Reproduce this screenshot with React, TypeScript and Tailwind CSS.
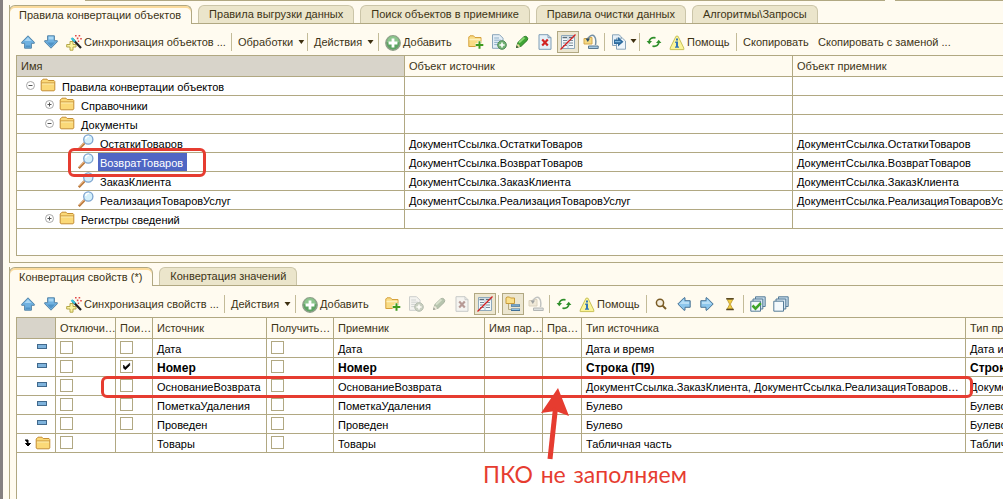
import type { ReactNode } from 'react'

type IconProps = { muted?: boolean }

function Svg({ children, muted }: { children: ReactNode; muted?: boolean }) {
  return (
    <svg
      className={`w-4 h-4 shrink-0 ${muted ? 'grayscale-[70%] opacity-50' : ''}`}
      viewBox="0 0 16 16"
      fill="none"
      aria-hidden="true"
    >
      {children}
    </svg>
  )
}

/* ---------- Icons ---------- */

const ArrowUp = () => (
  <Svg>
    <path d="M8 1.8L14.3 8.2V9.3H11.4V14.2H4.6V9.3H1.7V8.2Z" fill="#6fb1e0" stroke="#5585a8" />
    <path d="M8 3.2L11.5 7H4.5Z" fill="#a9d6f3" />
    <path d="M5.6 11.5H10.4V13.4H5.6Z" fill="#4f93c6" />
  </Svg>
)

const ArrowDown = () => (
  <Svg>
    <path d="M8 14.2L14.3 7.8V6.7H11.4V1.8H4.6V6.7H1.7V7.8Z" fill="#6fb1e0" stroke="#5585a8" />
    <path d="M5.6 2.6H10.4V5.5H5.6Z" fill="#a9d6f3" />
    <path d="M4 8.5H12L8 12.6Z" fill="#4f93c6" />
  </Svg>
)

const ArrowLeft = () => (
  <Svg>
    <path d="M1.8 8L8 1.8H9V4.7H14.2V11.3H9V14.2H8Z" fill="#8cc6ec" stroke="#4a7394" />
    <path d="M3.5 8L7.8 3.8V5.8H13V8Z" fill="#b9dff6" />
  </Svg>
)

const ArrowRight = () => (
  <Svg>
    <path d="M14.2 8L8 1.8H7V4.7H1.8V11.3H7V14.2H8Z" fill="#8cc6ec" stroke="#4a7394" />
    <path d="M12.5 8L8.2 3.8V5.8H3V8Z" fill="#b9dff6" />
  </Svg>
)

const Wand = () => (
  <Svg>
    <path d="M4 6.5H7V9.5H10V12H7V15.2H4V12H0.7V9.5H4Z" fill="#fbf3a0" stroke="#b5a84a" />
    <path d="M6.5 4L15 13" stroke="#222" strokeWidth="2.2" />
    <path d="M5.5 3L9 6.6" stroke="#35c3dc" strokeWidth="2.2" />
    <path d="M9 0h1.6v1.6H9zM12.6 0h1.6v1.6h-1.6zM10.8 2.6h1.6v1.6h-1.6zM14.2 3h1.6v1.6h-1.6zM11.8 5.6h1.4V7h-1.4z" fill="#e04848" />
  </Svg>
)

const AddCircle = () => (
  <Svg>
    <circle cx="8" cy="8" r="7.2" fill="#5da463" stroke="#8f9f8a" strokeWidth="1.4" />
    <path d="M2 7a6 6 0 0 1 12 0C10 9 6 9 2 7Z" fill="#8cc58d" />
    <path d="M6.6 3.6H9.4V6.6H12.4V9.4H9.4V12.4H6.6V9.4H3.6V6.6H6.6Z" fill="#fff" />
  </Svg>
)

const FolderAdd = () => (
  <Svg>
    <path d="M0.8 12.5V3L2 1.8H5.5L7 3.5H13V12.5Z" fill="#f9dc85" stroke="#d5a13c" />
    <path d="M1.5 5.5H12.5" stroke="#fdf0bd" strokeWidth="1.5" />
    <path d="M11.5 7V15M7.5 11H15.5" stroke="#fffbf0" strokeWidth="3.6" />
    <path d="M11.5 7.2V14.8M7.7 11H15.3" stroke="#3f9b1e" strokeWidth="2" />
  </Svg>
)

const DocAdd = ({ muted }: IconProps) => (
  <Svg muted={muted}>
    <path d="M1.5 0.7H8.5L12 4.2V14.3H1.5Z" fill="#e4eef6" stroke="#8aa5ba" />
    <path d="M3.2 4H8M3.2 6.2H10M3.2 8.4H8M3.2 10.6H7" stroke="#8fb0c8" />
    <circle cx="11" cy="11" r="4.3" fill="#74b374" stroke="#4f8a56" />
    <path d="M11 8.4V13.6M8.4 11H13.6" stroke="#fff" strokeWidth="1.6" />
  </Svg>
)

const Pencil = ({ muted }: IconProps) => (
  <Svg muted={muted}>
    <path d="M2.5 13.5L3.8 8.6L9.6 3Q11.5 1.6 13 3.1T13.2 6.4L7.2 12.2Z" fill="#3fa535" stroke="#2e7a2a" />
    <path d="M5 8.6L10.5 3.6" stroke="#8fdc78" strokeWidth="1.8" />
    <path d="M2.5 13.5L3.6 9.6L6.4 12.4Z" fill="#e9d8a0" />
    <path d="M2 14L2.8 11.6L4.4 13.2Z" fill="#2c4a24" />
  </Svg>
)

const DocDelete = ({ muted }: IconProps) => (
  <Svg muted={muted}>
    <path d="M2 0.7H11L14 3.7V15.3H2Z" fill="#e6f0f8" stroke="#7f9db6" />
    <path d="M11 0.7V3.7H14" stroke="#7f9db6" />
    <path d="M5.2 5.6L10.8 11.4M10.8 5.6L5.2 11.4" stroke="#d22222" strokeWidth="2.2" />
  </Svg>
)

const ListOff = () => (
  <Svg>
    <path d="M1.5 1.5H14.5V14.5H1.5Z" fill="#f3f8fb" stroke="#8fa9bb" />
    <path d="M2.5 3.5H7M9 3.5H13.5" stroke="#5d6f7c" strokeWidth="1.4" />
    <path d="M3 6.5H7M3 9H7M3 11.5H7M9 6.5H13M9 9H13M9 11.5H13" stroke="#7b8d99" />
    <path d="M8 2V14" stroke="#a9c0d0" />
    <path d="M0.5 15.5L15.5 0.5" stroke="#d81e1e" strokeWidth="1.3" />
  </Svg>
)

const MoveToFolder = ({ muted }: IconProps) => (
  <Svg muted={muted}>
    <path d="M1 10V4.5H5V3.5H9V10Z" fill="#f6d982" stroke="#d5a84c" />
    <path d="M4.5 6C5 2 9.5 0 11.5 2.5C12.8 4 13 8 12.5 11" stroke="#7590a5" strokeWidth="1.5" />
    <path d="M2.5 4.6H7L4.8 8Z" fill="#2e4f6b" />
    <path d="M5.5 12H15.2V14.5H5.5Z" fill="#a5c9e2" stroke="#5a7890" />
  </Svg>
)

const Hierarchy = () => (
  <Svg>
    <path d="M1 7.5V1.8L2 1H4.5L5.5 2H9.5V7.5Z" fill="#fbe08a" stroke="#c79a3a" />
    <path d="M3.5 8V13.5H7" stroke="#b5a87c" />
    <path d="M6 9.5H15M6 13.8H15" stroke="#3f6f96" strokeWidth="2.4" />
    <path d="M6.5 9.2H14.5M6.5 13.5H14.5" stroke="#8fc0e2" />
  </Svg>
)

const CopyDoc = () => (
  <Svg>
    <path d="M1.5 0.8H8L10.5 3V11.5H1.5Z" fill="#e6f0f8" stroke="#8aa5ba" />
    <path d="M5.5 4.2H11.5L14.5 7V15.2H5.5Z" fill="#eff6fb" stroke="#8aa5ba" />
    <path d="M3 5.5H7V3L12.5 7.8L7 12.6V10H3Z" fill="#2f6c9e" />
    <path d="M4 7.6H9.5" stroke="#7db6dd" strokeWidth="1.2" />
  </Svg>
)

const Refresh = () => (
  <Svg>
    <path d="M3.2 8.2C3 5 5.5 3.2 9.5 3.8" stroke="#2f8f2a" strokeWidth="1.7" />
    <path d="M12.8 7.8C13 11 10.5 12.8 6.5 12.2" stroke="#2f8f2a" strokeWidth="1.7" />
    <path d="M0.6 7H6L3.3 10.2Z" fill="#2f8f2a" />
    <path d="M10 9H15.4L12.7 5.8Z" fill="#2f8f2a" />
  </Svg>
)

const Info = () => (
  <Svg>
    <path d="M7 1.2H9L14.8 13V14.6H1.2V13Z" fill="#fbf59a" stroke="#c9c258" />
    <path d="M7 3.6H9V5.4H7zM6.2 6.6H9V11.4H10V12.8H6V11.4H7V8H6.2Z" fill="#3274b8" />
  </Svg>
)

const Search = () => (
  <Svg>
    <circle cx="7" cy="6.8" r="3.6" fill="#f5efe0" stroke="#7a5c25" strokeWidth="1.5" />
    <path d="M9.6 9.6L13 13" stroke="#7a5c25" strokeWidth="2" />
  </Svg>
)

const Hourglass = () => (
  <Svg>
    <path d="M5.2 3.5H10.8L8.6 7.8V8.8L10.8 13H5.2L7.4 8.8V7.8Z" fill="#f2cf45" stroke="#b8932a" strokeWidth="0.8" />
    <path d="M4.2 2.8H11.8M4.2 13.4H11.8" stroke="#5b4a22" strokeWidth="1.5" />
  </Svg>
)

const StackPages = ({ checked }: { checked?: boolean }) => (
  <Svg>
    <path d="M5.5 0.8H15.2V10.5H5.5Z" fill="#c5dbea" stroke="#557b97" />
    <path d="M3 3H12.8V13H3Z" fill="#d8e7f1" stroke="#557b97" />
    <path d="M0.8 5.2H10.5V15.2H0.8Z" fill="#f4f9fc" stroke="#557b97" />
    {checked && <path d="M2.5 9.5L5.5 12.6L10.8 7.2" stroke="#3fa52a" strokeWidth="2.6" />}
  </Svg>
)

const Folder = () => (
  <Svg>
    <path d="M1.2 13V4L3 2.2H7L8.2 3.5H14L14.8 4.5V13L14 13.8H2Z" fill="#fbd978" stroke="#c58f35" />
    <path d="M1.5 6H14.5" stroke="#c58f35" />
    <path d="M2 7H14" stroke="#fdedb0" />
  </Svg>
)

const Magnifier = () => (
  <Svg>
    <path d="M0.8 15.2L6.5 9.2" stroke="#b9783c" strokeWidth="2.4" />
    <path d="M1 14.2L6 9" stroke="#eab27c" />
    <circle cx="10.3" cy="5.5" r="4.6" fill="#d5f0fb" stroke="#7ba3cf" strokeWidth="1.3" />
    <path d="M7.6 5C8 3 9.5 2.2 11 2.4" stroke="#fff" strokeWidth="1.4" />
  </Svg>
)

function TreeToggle({ open }: { open: boolean }) {
  return (
    <button aria-label={open ? 'Свернуть' : 'Развернуть'} className="shrink-0">
      <svg className="w-[9px] h-[9px]" viewBox="0 0 9 9" fill="none">
        <circle cx="4.5" cy="4.5" r="4" fill="#fff" stroke="#a9a9a9" />
        <path d="M2.5 4.5H6.5" stroke="#555" />
        {!open && <path d="M4.5 2.5V6.5" stroke="#555" />}
      </svg>
    </button>
  )
}

/* ---------- Toolbar parts ---------- */

function IconButton({ label, active, children }: { label: string; active?: boolean; children: ReactNode }) {
  return (
    <button aria-label={label} className="flex w-[23px] shrink-0 items-center justify-center">
      <span
        className={`flex items-center justify-center w-[22px] h-[22px] ${
          active ? 'border border-[#b1a882] bg-[#ece6d0]' : ''
        }`}
      >
        {children}
      </span>
    </button>
  )
}

function TextButton({ className = '', children }: { className?: string; children: ReactNode }) {
  return (
    <button
      className={`flex h-[22px] shrink-0 items-center gap-0.5 pl-1 pt-0.5 whitespace-nowrap text-[#3d3416] ${className}`}
    >
      {children}
    </button>
  )
}

const Caret = () => (
  <svg className="ml-[3px] mb-0.5 w-[7px] h-1" viewBox="0 0 7 4" aria-hidden="true">
    <path d="M0.5 0H6.5L3.5 4Z" fill="#3d2f10" />
  </svg>
)

const Separator = () => (
  <div className="flex w-[5px] shrink-0 justify-center">
    <div className="w-px h-[18px] bg-[#c3bb98]" />
  </div>
)

function Tabs({ items }: { items: string[] }) {
  return (
    <div role="tablist" className="flex shrink-0 gap-[6px] h-[19px] border-b border-[#b1a882]">
      {items.map((item, i) => (
        <button
          key={item}
          role="tab"
          aria-selected={i === 0}
          className={`shrink-0 rounded-t-md border border-b-0 whitespace-nowrap text-[#3d3416] ${
            i === 0
              ? '-ml-px h-[19px] px-[9px] pr-[10px] border-[#b1a882] bg-[#fffbf0] shadow-[inset_0_2px_0_#fbdb9c]'
              : 'h-[18px] px-[10px] border-[#cbc5a8] bg-[#ebe5cb]'
          }`}
        >
          {item}
        </button>
      ))}
    </div>
  )
}

/* ---------- Data ---------- */

type TreeRow = { level: number; name: string; kind: 'open' | 'closed' | 'leaf'; ref?: string; selected?: boolean }

const tree: TreeRow[] = [
  { level: 0, name: 'Правила конвертации объектов', kind: 'open' },
  { level: 1, name: 'Справочники', kind: 'closed' },
  { level: 1, name: 'Документы', kind: 'open' },
  { level: 2, name: 'ОстаткиТоваров', kind: 'leaf', ref: 'ДокументСсылка.ОстаткиТоваров' },
  { level: 2, name: 'ВозвратТоваров', kind: 'leaf', ref: 'ДокументСсылка.ВозвратТоваров', selected: true },
  { level: 2, name: 'ЗаказКлиента', kind: 'leaf', ref: 'ДокументСсылка.ЗаказКлиента' },
  { level: 2, name: 'РеализацияТоваровУслуг', kind: 'leaf', ref: 'ДокументСсылка.РеализацияТоваровУслуг' },
  { level: 1, name: 'Регистры сведений', kind: 'closed' },
]

const indents = ['pl-[9px]', 'pl-7', 'pl-[61px]']

const properties = [
  { name: 'Дата', type: 'Дата и время', search: false },
  { name: 'Номер', type: 'Строка (П9)', search: true, bold: true },
  {
    name: 'ОснованиеВозврата',
    type: 'ДокументСсылка.ЗаказКлиента, ДокументСсылка.РеализацияТоваров…',
    search: false,
  },
  { name: 'ПометкаУдаления', type: 'Булево', search: false },
  { name: 'Проведен', type: 'Булево', search: false },
  { name: 'Товары', type: 'Табличная часть', group: true },
]

const columns = [
  { title: '', width: 'w-[39px]' },
  { title: 'Отключи…', width: 'w-[60px]' },
  { title: 'Пои…', width: 'w-[37px]' },
  { title: 'Источник', width: 'w-[114px]' },
  { title: 'Получить…', width: 'w-[67px]' },
  { title: 'Приемник', width: 'w-[151px]' },
  { title: 'Имя пар…', width: 'w-[58px]' },
  { title: 'Пра…', width: 'w-[39px]' },
  { title: 'Тип источника', width: 'w-[384px]' },
]

const th = 'h-[21px] border-b border-[#b1a882] pl-1 text-left font-normal text-[#3d3416] whitespace-nowrap overflow-hidden'
const td = 'h-[19px] border-b border-[#b1a882] pl-1 pt-[3px] leading-[15px] text-black whitespace-nowrap overflow-hidden'
const tdCheck = 'h-[19px] border-r border-b border-[#b1a882] pl-1 pt-0.5 align-top'

function Check({ label, checked }: { label: string; checked?: boolean }) {
  return (
    <span className="relative block w-[13px] h-[13px]">
      <input
        type="checkbox"
        aria-label={label}
        defaultChecked={checked}
        className="peer block appearance-none w-[13px] h-[13px] border border-[#b1a882] bg-white"
      />
      <svg className="absolute inset-0 hidden peer-checked:block pointer-events-none" viewBox="0 0 13 13" fill="none">
        <path d="M3.5 5V8L5.3 9.8L9.7 5.4V3.2L5.3 7.2Z" fill="#000" stroke="#000" strokeWidth="0.6" />
      </svg>
    </span>
  )
}

function TreeTable() {
  return (
    <div className="relative ml-[6px] border-t border-l border-b border-[#b1a882] bg-white pb-[26px]">
      <table className="w-full table-fixed border-separate border-spacing-0">
        <colgroup>
          <col className="w-[388px]" />
          <col className="w-[388px]" />
          <col />
        </colgroup>
        <thead>
          <tr>
            <th className={`${th} border-r bg-[#d8d4ca]`}>Имя</th>
            <th className={`${th} border-r bg-[#fffbf0]`}>Объект источник</th>
            <th className={`${th} bg-[#fffbf0]`}>Объект приемник</th>
          </tr>
        </thead>
        <tbody>
          {tree.map((row) => (
            <tr key={row.name}>
              <td className="h-[19px] border-r border-b border-[#b1a882] p-0">
                <div className={`flex h-[18px] items-start ${indents[row.level]}`}>
                  {row.kind === 'leaf' ? (
                    <Magnifier />
                  ) : (
                    <span className="flex items-center gap-[5px]">
                      <TreeToggle open={row.kind === 'open'} />
                      <Folder />
                    </span>
                  )}
                  <span
                    className={`ml-1 h-[18px] pt-[3px] pl-0.5 leading-[15px] whitespace-nowrap ${
                      row.selected ? 'bg-[#4f66c4] pr-1 text-white' : 'text-black'
                    }`}
                  >
                    {row.name}
                  </span>
                </div>
              </td>
              <td className={`${td} border-r`}>{row.ref}</td>
              <td className={td}>{row.ref}</td>
            </tr>
          ))}
        </tbody>
      </table>
      {/* mark around the selected document */}
      <div className="absolute left-[51px] top-[92px] w-[138px] h-[29px] rounded-md border-3 border-[#e63c30]" />
    </div>
  )
}

function PropertyTable() {
  return (
    <div className="relative ml-[6px] flex-1 border-t border-l border-[#b1a882] bg-white">
      <table className="w-full table-fixed border-separate border-spacing-0 bg-white">
        <colgroup>
          {columns.map((c) => (
            <col key={c.title} className={c.width} />
          ))}
          <col />
        </colgroup>
        <thead>
          <tr>
            {columns.map((c, i) => (
              <th key={c.title} className={`${th} border-r ${i === 0 ? 'bg-[#d8d4ca]' : 'bg-[#fffbf0]'}`}>
                {c.title}
              </th>
            ))}
            <th className={`${th} bg-[#fffbf0]`}>Тип приемника</th>
          </tr>
        </thead>
        <tbody>
          {properties.map((p) => (
            <tr key={p.name} className={p.bold ? 'text-[12px] font-bold' : ''}>
              <td className="h-[19px] border-r border-b border-[#b1a882] p-0">
                {p.group ? (
                  <div className="flex items-center pl-2">
                    <svg className="w-[6px] h-2 mr-1" viewBox="0 0 6 8" fill="none" aria-hidden="true">
                      <path d="M0 1H3V5M0.5 4.5L3 7L5.5 4.5Z" stroke="#000" fill="#000" />
                    </svg>
                    <Folder />
                  </div>
                ) : (
                  <div className="ml-5 mb-1 w-[10px] h-[5px] border border-[#41698c] bg-[#7fb3dc]" />
                )}
              </td>
              <td className={tdCheck}>
                <Check label="Отключить" />
              </td>
              <td className={tdCheck}>{!p.group && <Check label="Поиск" checked={p.search} />}</td>
              <td className={`${td} border-r`}>{p.name}</td>
              <td className={tdCheck}>
                <Check label="Получить" />
              </td>
              <td className={`${td} border-r`}>{p.name}</td>
              <td className={`${td} border-r`}></td>
              <td className={`${td} border-r`}></td>
              <td className={`${td} border-r`}>{p.type}</td>
              <td className={td}>{p.type}</td>
            </tr>
          ))}
        </tbody>
      </table>

      {/* marks: property row, arrow and the note */}
      <div className="absolute left-[84px] top-[58px] w-[872px] h-[22px] rounded-md border-3 border-[#e63c30]" />
      <svg className="absolute left-[520px] top-[68px] w-9 h-[76px]" viewBox="0 0 36 76" fill="none" aria-hidden="true">
        <path d="M21 2L32 30L18.5 25L4 27Z" fill="#e63c30" />
        <path d="M18.5 22L13 73" stroke="#e63c30" strokeWidth="5" />
      </svg>
      <div className="absolute left-[466px] top-36 text-[23px] leading-7 whitespace-nowrap text-[#e63c30] font-['Comic_Sans_MS','Comic_Neue','Lato',sans-serif]">
        ПКО не заполняем
      </div>
    </div>
  )
}

export default function App() {
  return (
    <div className="h-screen overflow-hidden bg-white pb-0.5 text-[11px] font-['Liberation_Sans',Arial,sans-serif]">
      <div className="flex h-full flex-col border-l-3 border-[#858080] bg-[#fffbf0] pl-[6px]">
        {/* bottom edge of the form fields above */}
        <div className="flex h-[5px] shrink-0 gap-[10px] pl-[76px]">
          <div className="h-px w-[800px] bg-[#b1a882]" />
          <div className="h-px flex-1 bg-[#b1a882]" />
        </div>

        <section className="shrink-0 border-l border-b border-[#b1a882] pb-[6px]">
          <Tabs
            items={[
              'Правила конвертации объектов',
              'Правила выгрузки данных',
              'Поиск объектов в приемнике',
              'Правила очистки данных',
              'Алгоритмы\\Запросы',
            ]}
          />
          <div role="toolbar" className="flex h-[31px] items-center overflow-hidden pt-[6px] pb-[2px] pl-[6px]">
            <IconButton label="Вверх"><ArrowUp /></IconButton>
            <IconButton label="Вниз"><ArrowDown /></IconButton>
            <TextButton className="w-[167px]"><Wand />Синхронизация объектов ...</TextButton>
            <Separator />
            <TextButton className="w-[71px]">Обработки<Caret /></TextButton>
            <Separator />
            <TextButton className="w-[66px]">Действия<Caret /></TextButton>
            <Separator />
            <TextButton className="w-[83px]">
              <AddCircle />
              <span><u>Д</u>обавить</span>
            </TextButton>
            <IconButton label="Добавить группу"><FolderAdd /></IconButton>
            <IconButton label="Скопировать"><DocAdd /></IconButton>
            <IconButton label="Изменить"><Pencil /></IconButton>
            <IconButton label="Удалить"><DocDelete /></IconButton>
            <IconButton label="Отключить отбор" active><ListOff /></IconButton>
            <IconButton label="Переместить в группу"><MoveToFolder /></IconButton>
            <Separator />
            <button aria-label="Ввести на основании" className="flex w-[30px] shrink-0 items-center pl-1">
              <CopyDoc />
              <Caret />
            </button>
            <Separator />
            <IconButton label="Обновить"><Refresh /></IconButton>
            <TextButton className="w-[69px]"><Info />Помощь</TextButton>
            <Separator />
            <TextButton className="w-[75px]">Скопировать</TextButton>
            <TextButton>Скопировать с заменой ...</TextButton>
          </div>
          <TreeTable />
        </section>

        <section className="mt-1 flex min-h-0 flex-1 flex-col border-l border-[#b1a882]">
          <Tabs items={['Конвертация свойств (*)', 'Конвертация значений']} />
          <div role="toolbar" className="flex h-[31px] shrink-0 items-center overflow-hidden pt-[6px] pb-[2px] pl-[6px]">
            <IconButton label="Вверх"><ArrowUp /></IconButton>
            <IconButton label="Вниз"><ArrowDown /></IconButton>
            <TextButton className="w-40"><Wand />Синхронизация свойств ...</TextButton>
            <Separator />
            <TextButton className="w-[66px]">Действия<Caret /></TextButton>
            <Separator />
            <TextButton className="w-[83px]">
              <AddCircle />
              <span><u>Д</u>обавить</span>
            </TextButton>
            <IconButton label="Добавить группу"><FolderAdd /></IconButton>
            <IconButton label="Скопировать"><DocAdd muted /></IconButton>
            <IconButton label="Изменить"><Pencil muted /></IconButton>
            <IconButton label="Удалить"><DocDelete muted /></IconButton>
            <IconButton label="Отключить отбор" active><ListOff /></IconButton>
            <Separator />
            <IconButton label="Иерархия" active><Hierarchy /></IconButton>
            <IconButton label="Переместить в группу"><MoveToFolder muted /></IconButton>
            <Separator />
            <IconButton label="Обновить"><Refresh /></IconButton>
            <TextButton className="w-[69px]"><Info />Помощь</TextButton>
            <Separator />
            <IconButton label="Найти"><Search /></IconButton>
            <IconButton label="Назад"><ArrowLeft /></IconButton>
            <IconButton label="Вперед"><ArrowRight /></IconButton>
            <IconButton label="Ожидание"><Hourglass /></IconButton>
            <Separator />
            <IconButton label="Отметить все"><StackPages checked /></IconButton>
            <IconButton label="Снять отметки"><StackPages /></IconButton>
          </div>
          <PropertyTable />
        </section>
      </div>
    </div>
  )
}
